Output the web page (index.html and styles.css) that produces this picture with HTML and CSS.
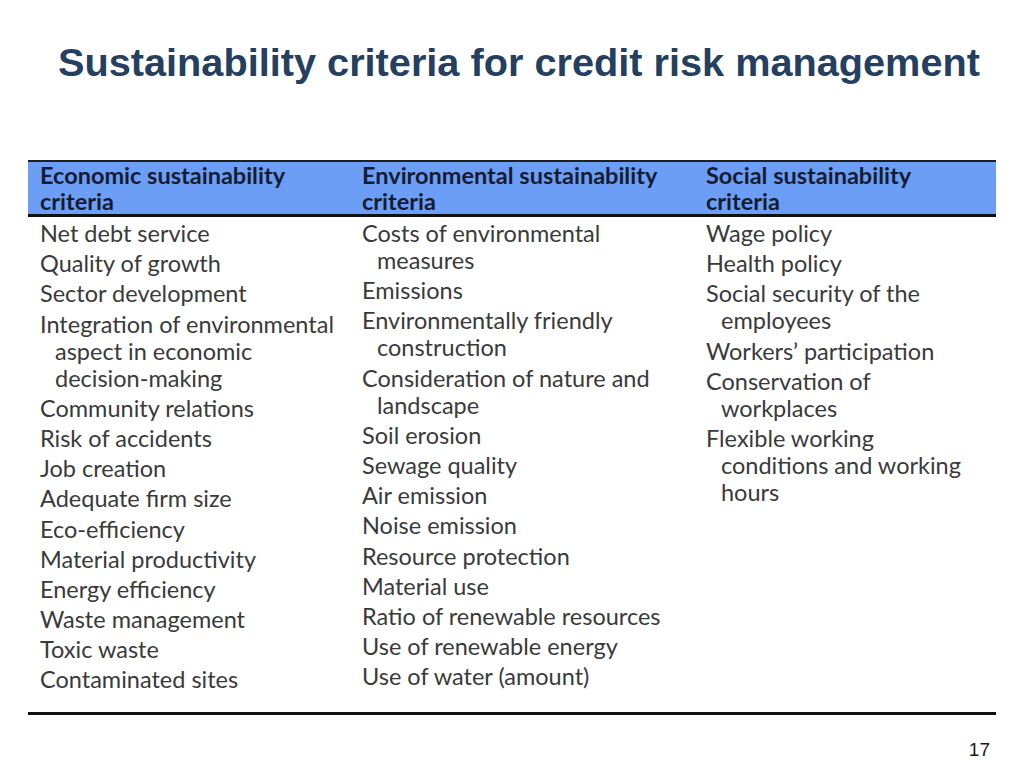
FILE: index.html
```html
<!DOCTYPE html>
<html lang="en">
<head>
<meta charset="utf-8">
<title>Sustainability criteria for credit risk management</title>
<link rel="stylesheet" href="styles.css">
</head>
<body>
<div class="slide">
  <h1 class="title">Sustainability criteria for credit risk management</h1>
  <div class="table">
    <div class="head">
      <div class="col c1">Economic sustainability<br>criteria</div>
      <div class="col c2">Environmental sustainability<br>criteria</div>
      <div class="col c3">Social sustainability<br>criteria</div>
    </div>
    <div class="body">
      <ul class="col c1">
        <li>Net debt service</li>
        <li>Quality of growth</li>
        <li>Sector development</li>
        <li>Integration of environmental<br>aspect in economic<br>decision-making</li>
        <li>Community relations</li>
        <li>Risk of accidents</li>
        <li>Job creation</li>
        <li>Adequate firm size</li>
        <li>Eco-efficiency</li>
        <li>Material productivity</li>
        <li>Energy efficiency</li>
        <li>Waste management</li>
        <li>Toxic waste</li>
        <li>Contaminated sites</li>
      </ul>
      <ul class="col c2">
        <li>Costs of environmental<br>measures</li>
        <li>Emissions</li>
        <li>Environmentally friendly<br>construction</li>
        <li>Consideration of nature and<br>landscape</li>
        <li>Soil erosion</li>
        <li>Sewage quality</li>
        <li>Air emission</li>
        <li>Noise emission</li>
        <li>Resource protection</li>
        <li>Material use</li>
        <li>Ratio of renewable resources</li>
        <li>Use of renewable energy</li>
        <li>Use of water (amount)</li>
      </ul>
      <ul class="col c3">
        <li>Wage policy</li>
        <li>Health policy</li>
        <li>Social security of the<br>employees</li>
        <li>Workers’ participation</li>
        <li>Conservation of<br>workplaces</li>
        <li>Flexible working<br>conditions and working<br>hours</li>
      </ul>
    </div>
  </div>
  <div class="footer"><span class="page">17</span></div>
</div>
</body>
</html>
```
FILE: styles.css
```css
html, body {
  margin: 0;
  padding: 0;
  background: #ffffff;
}
.slide {
  width: 1024px;
  height: 768px;
  display: flex;
  flex-direction: column;
  overflow: hidden;
}
.title {
  margin: 0;
  padding: 37px 0 0 58px;
  height: 125px;
  box-sizing: border-box;
  font-family: "Liberation Sans", Arial, sans-serif;
  font-weight: bold;
  font-size: 39.7px;
  line-height: 50px;
  color: #243f60;
  white-space: nowrap;
}
.table {
  margin: 35px 28px 0 28px;
  border-top: 2px solid #1f1f1f;
  border-bottom: 3px solid #111111;
  font-family: Lato, "Open Sans", sans-serif;
  font-size: 23.5px;
  white-space: nowrap;
}
.head {
  display: flex;
  background: #6d9ef5;
  border-bottom: 3px solid #111111;
  height: 55px;
  box-sizing: border-box;
  padding-top: 0;
  font-weight: bold;
  color: #141c33;
  line-height: 26px;
}
.col {
  box-sizing: border-box;
}
.c1 { width: 322px; padding-left: 12px; }
.c2 { width: 344px; padding-left: 12px; }
.c3 { width: 302px; padding-left: 12px; }
.body {
  display: flex;
  padding: 3px 0 15px;
}
ul.col {
  list-style: none;
  margin: 0;
  color: #3a3a3a;
  line-height: 27px;
}
ul.col li {
  padding-left: 15px;
  text-indent: -15px;
  margin-bottom: 3.2px;
}
.footer {
  flex: 1;
  display: flex;
  justify-content: flex-end;
  align-items: flex-start;
  padding: 24px 34px 0 0;
}
.page {
  font-family: "Liberation Sans Narrow", "Liberation Sans", sans-serif;
  font-size: 19px;
  color: #1a1a1a;
}
```
